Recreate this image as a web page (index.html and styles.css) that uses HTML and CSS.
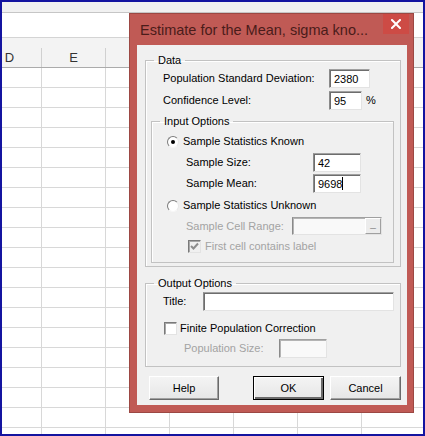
FILE: index.html
```html
<!DOCTYPE html>
<html lang="en">
<head>
    <meta charset="UTF-8">
    <title>Estimate for the Mean</title>
    <link rel="stylesheet" href="styles.css">
</head>
<body>
    <div class="screen">
        <div class="ribbon"></div>
        <div class="formula-bar"></div>
        <div class="col-heads">
            <div class="col-head first">D</div>
            <div class="col-head">E</div>
            <div class="col-head"></div>
            <div class="col-head"></div>
            <div class="col-head"></div>
            <div class="col-head"></div>
            <div class="col-head"></div>
        </div>
        <div class="sheet"></div>

        <div class="dialog">
            <div class="titlebar">
                <span class="title">Estimate for the Mean, sigma kno...</span>
                <div class="close">
                    <svg width="10" height="10" viewBox="0 0 10 10">
                        <path d="M1 1 L9 9 M9 1 L1 9" stroke="#fff" stroke-width="2" stroke-linecap="square"/>
                    </svg>
                </div>
            </div>
            <div class="client">
                <fieldset class="group data">
                    <legend>Data</legend>
                    <div class="row sd-row">
                        <label class="lbl w166">Population Standard Deviation:</label>
                        <div class="field w41">2380</div>
                    </div>
                    <div class="row cl-row">
                        <label class="lbl w166">Confidence Level:</label>
                        <div class="field w33">95</div>
                        <span class="unit">%</span>
                    </div>

                    <fieldset class="group input-opts">
                        <legend>Input Options</legend>
                        <div class="option known">
                            <span class="radio checked"></span>Sample Statistics Known
                        </div>
                        <div class="row sub size-row">
                            <label class="lbl w127">Sample Size:</label>
                            <div class="field w48">42</div>
                        </div>
                        <div class="row sub mean-row">
                            <label class="lbl w127">Sample Mean:</label>
                            <div class="field w48">9698<span class="caret"></span></div>
                        </div>
                        <div class="option unknown">
                            <span class="radio"></span>Sample Statistics Unknown
                        </div>
                        <div class="row sub range-row disabled">
                            <label class="lbl w106">Sample Cell Range:</label>
                            <div class="field off w90">
                                <span class="pick">_</span>
                            </div>
                        </div>
                        <div class="option check-row disabled">
                            <span class="check on off">
                                <svg width="9" height="9" viewBox="0 0 9 9">
                                    <path d="M1 4 L3.5 6.5 L8 1.5" fill="none" stroke="#8d8d8d" stroke-width="2"/>
                                </svg>
                            </span>First cell contains label
                        </div>
                    </fieldset>
                </fieldset>

                <fieldset class="group output">
                    <legend>Output Options</legend>
                    <div class="row title-row">
                        <label class="lbl w40">Title:</label>
                        <div class="field w191"></div>
                    </div>
                    <div class="option fpc-row">
                        <span class="check"></span>Finite Population Correction
                    </div>
                    <div class="row pop-row disabled">
                        <label class="lbl w95">Population Size:</label>
                        <div class="field off w48"></div>
                    </div>
                </fieldset>

                <div class="buttons">
                    <button class="btn help">Help</button>
                    <button class="btn ok">OK</button>
                    <button class="btn cancel">Cancel</button>
                </div>
            </div>
        </div>
    </div>
</body>
</html>
```

FILE: styles.css
```css
body {
    margin: 0;
    font-family: 'Liberation Sans', Arial, sans-serif;
}
.screen {
    position: relative;
    width: 425px;
    height: 436px;
    box-sizing: border-box;
    border: 2px solid #1414a0;
    display: flex;
    flex-direction: column;
    overflow: hidden;
    background: #fff;
}
.ribbon {
    height: 10px;
    background: #f1f1f1;
    border-bottom: 1px solid #c6c6c6;
}
.formula-bar {
    height: 24px;
    background: #fff;
    border-bottom: 1px solid #d4d4d4;
}
.col-heads {
    height: 29px;
    background: #f3f3f3;
    border-bottom: 1px solid #ababab;
    display: flex;
    align-items: flex-end;
}
.col-head {
    flex: none;
    width: 63px;
    height: 19px;
    border-right: 1px solid #d0d0d0;
    text-align: center;
    font-size: 13px;
    line-height: 19px;
    color: #333;
}
.col-head.first {
    margin-left: -24px;
}
.sheet {
    flex: 1;
    background-color: #fff;
    background-image:
        linear-gradient(to right, transparent 63px, #d8d8d8 63px),
        linear-gradient(to bottom, transparent 19px, #d8d8d8 19px);
    background-size: 64px 100%, 100% 20px;
    background-position: -24px 0, 0 0;
}

.dialog {
    position: absolute;
    left: 127px;
    top: 11px;
    width: 285px;
    height: 400px;
    box-sizing: border-box;
    border: 1px solid #9c4843;
    background: #c05a55;
    display: flex;
    flex-direction: column;
}
.titlebar {
    height: 31px;
    display: flex;
    align-items: center;
    padding: 0 4px 0 10px;
    color: #4a1c1a;
}
.title {
    font-size: 14.5px;
    color: #4a1c1a;
    padding-top: 1px;
}
.close {
    margin-left: auto;
    align-self: flex-start;
    width: 26px;
    height: 20px;
    background: #cd4b45;
    display: flex;
    align-items: center;
    justify-content: center;
}
.client {
    flex: 1;
    margin: 0 6px 7px 7px;
    background: #f0f0f0;
    padding: 9px 6px 0 8px;
    font-size: 11px;
    line-height: 13px;
    color: #000;
}

.group {
    margin: 0;
    padding: 0;
    min-inline-size: 0;
    border: 1px solid #c2c2c2;
    box-shadow: inset 1px 1px 0 #fff;
}
.group legend {
    margin-left: 8px;
    padding: 0 4px;
    line-height: 13px;
}
.data {
    padding-bottom: 3px;
}
.input-opts {
    margin: 5px 6px 0 5px;
    padding-bottom: 9px;
}
.output {
    margin-top: 10px;
    padding-bottom: 8px;
}

.row {
    display: flex;
    align-items: center;
    padding-left: 17px;
}
.sd-row { margin-top: 2px; }
.cl-row { margin-top: 3px; }
.row.sub { padding-left: 34px; }
.size-row { margin-top: 5px; }
.mean-row { margin-top: 2px; }
.range-row { margin-top: 5px; }
.title-row { margin-top: 2px; }
.pop-row { margin-top: 4px; padding-left: 38px; }

.lbl { flex: none; }
.w166 { width: 166px; }
.w127 { width: 127px; }
.w106 { width: 106px; }
.w95 { width: 95px; }
.w40 { width: 40px; }

.field {
    position: relative;
    height: 19px;
    box-sizing: border-box;
    border: 1px solid;
    border-color: #a0a0a0 #e3e3e3 #e3e3e3 #8a8a8a;
    box-shadow: inset 1px 1px 0 #6d6d6d;
    background: #fff;
    padding: 2px 0 0 4px;
    line-height: 14px;
}
.field.off {
    background: #f9f9f9;
    box-shadow: inset 1px 1px 0 #b4b4b4;
}
.range-row .field { height: 18px; }
.w33 { width: 33px; }
.w41 { width: 41px; }
.w48 { width: 48px; }
.w90 { width: 90px; }
.w191 { width: 191px; }
.unit {
    margin-left: 4px;
}
.caret {
    display: inline-block;
    width: 1px;
    height: 13px;
    background: #000;
    vertical-align: -2px;
}
.pick {
    position: absolute;
    right: 0;
    top: 0;
    width: 16px;
    height: 16px;
    box-sizing: border-box;
    border: 1px solid;
    border-color: #fff #a0a0a0 #a0a0a0 #fff;
    background: #ececec;
    color: #8a8a8a;
    font-size: 10px;
    line-height: 10px;
    text-align: center;
}

.option {
    display: flex;
    align-items: center;
    height: 13px;
    padding-left: 15px;
}
.known { margin-top: 7px; }
.unknown { margin-top: 6px; }
.check-row { margin-top: 5px; padding-left: 36px; }
.fpc-row { margin-top: 11px; padding-left: 18px; }

.radio {
    flex: none;
    width: 12px;
    height: 12px;
    box-sizing: border-box;
    border-radius: 50%;
    border: 1px solid;
    border-color: #7c7c7c #e8e8e8 #f6f6f6 #7c7c7c;
    background: #fff;
    margin-right: 4px;
    display: flex;
    align-items: center;
    justify-content: center;
}
.radio.checked::after {
    content: "";
    width: 4px;
    height: 4px;
    border-radius: 50%;
    background: #000;
}
.check {
    flex: none;
    width: 13px;
    height: 13px;
    box-sizing: border-box;
    border: 1px solid;
    border-color: #7a7a7a #e3e3e3 #e3e3e3 #7a7a7a;
    box-shadow: inset 1px 1px 0 #a8a8a8;
    background: #fff;
    margin-right: 3px;
    display: flex;
    align-items: center;
    justify-content: center;
}
.check.off {
    background: #f0f0f0;
    margin-right: 4px;
}
.disabled {
    color: #a3a3a3;
}

.buttons {
    display: flex;
    margin: 9px 0 0 4px;
}
.btn {
    width: 70px;
    height: 24px;
    box-sizing: border-box;
    font-family: 'Liberation Sans', Arial, sans-serif;
    font-size: 11px;
    color: #000;
    background: linear-gradient(#f4f4f4, #e6e6e6);
    border: 1px solid;
    border-color: #fff #6a6a6a #6a6a6a #fff;
    box-shadow: inset -1px -1px 0 #a0a0a0;
    padding: 0;
}
.btn.ok {
    width: 71px;
    margin-left: 34px;
    border-color: #000;
    box-shadow: inset 1px 1px 0 #fff, inset -2px -2px 0 #6a6a6a;
}
.btn.cancel {
    width: 71px;
    margin-left: 6px;
}
```
